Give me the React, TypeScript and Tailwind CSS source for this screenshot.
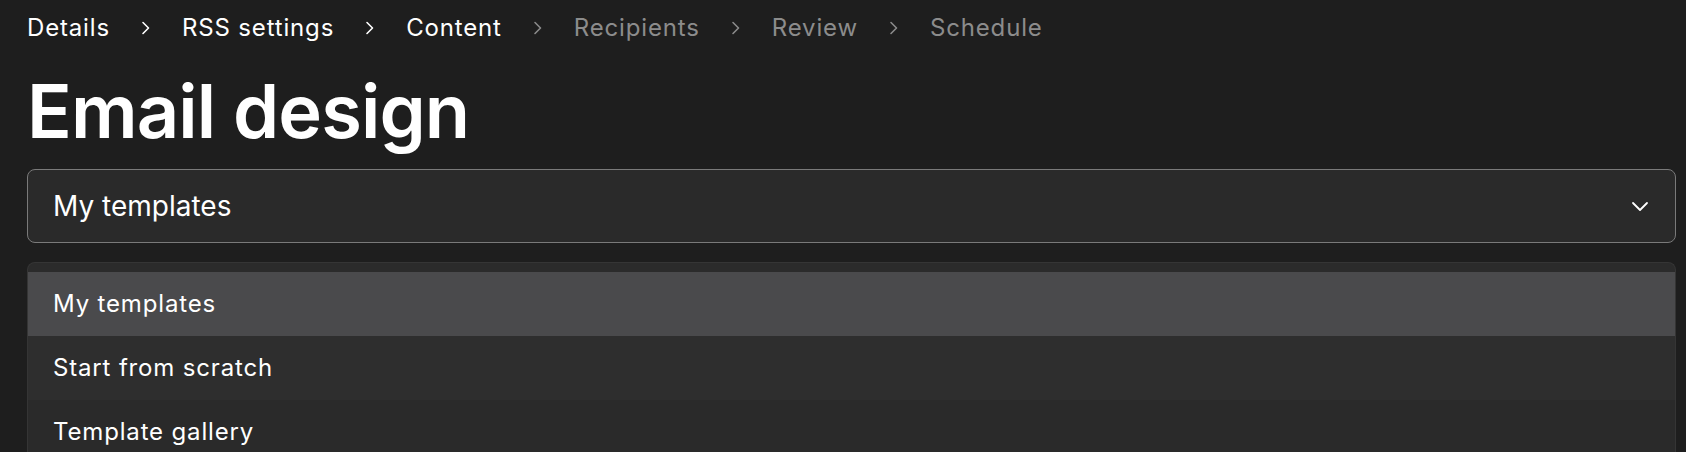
import React from "react";

const Chevron = ({ className }: { className: string }) => (
  <svg width="12" height="16" viewBox="0 0 12 16" className={className} fill="none">
    <path d="M3 2.5 L8.5 8 L3 13.5" stroke="currentColor" strokeWidth="1.6" strokeLinecap="round" strokeLinejoin="round" />
  </svg>
);

const steps = [
  { label: "Details", active: true },
  { label: "RSS settings", active: true },
  { label: "Content", active: true },
  { label: "Recipients", active: false },
  { label: "Review", active: false },
  { label: "Schedule", active: false },
];

export default function App() {
  return (
    <div
      className="w-full h-[452px] overflow-hidden bg-[#1e1e1e] pl-[27px] pr-[10px]"
      style={{ fontFamily: "Inter, 'Noto Sans', sans-serif" }}
    >
      <nav className="flex items-center pt-[12px] h-[43px] text-[24px] leading-[32px] tracking-[0.035em]">
        {steps.map((s, i) => (
          <React.Fragment key={s.label}>
            {i > 0 && (
              <Chevron
                className={`mx-[30px] ${i <= 2 ? "text-white" : "text-[#8a8a8a]"}`}
              />
            )}
            <span className={s.active ? "text-white" : "text-[#8c8c8c]"}>{s.label}</span>
          </React.Fragment>
        ))}
      </nav>
      <h1 className="mt-[31px] text-[74px] leading-[74px] font-semibold text-white tracking-[-0.012em]">
        Email design
      </h1>
      <div className="mt-[21px] w-[1649px] h-[74px] rounded-[8px] border border-[#7a7a7a] bg-[#2a2a2a] flex items-center justify-between pl-[25px] pr-[26px]">
        <span className="text-[28px] text-white">My templates</span>
        <svg width="18" height="12" viewBox="0 0 18 12" fill="none">
          <path d="M2 3 L9 10 L16 3" stroke="white" strokeWidth="1.8" strokeLinecap="round" strokeLinejoin="round" />
        </svg>
      </div>
      <div className="mt-[19px] w-[1649px] rounded-t-[8px] border border-b-0 border-[#353535] bg-[#2b2b2b] pt-[9px]">
        <div className="h-[64px] flex items-center pl-[25px] bg-[#4a4a4c] text-[24px] tracking-[0.035em] text-white">
          My templates
        </div>
        <div className="h-[64px] flex items-center pl-[25px] bg-[#2e2e2e] text-[24px] tracking-[0.035em] text-white">
          Start from scratch
        </div>
        <div className="h-[64px] flex items-center pl-[25px] bg-[#2a2a2a] text-[24px] tracking-[0.035em] text-white">
          Template gallery
        </div>
      </div>
    </div>
  );
}
